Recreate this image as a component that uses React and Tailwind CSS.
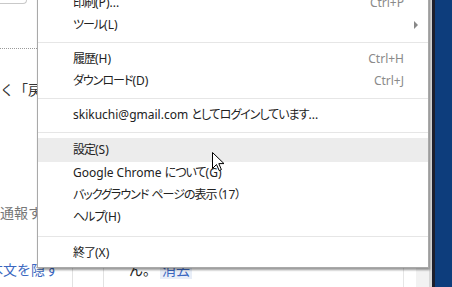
import { Fragment } from "react";

const items = [
  { label: "印刷(P)...", shortcut: "Ctrl+P" },
  { label: "ツール(L)", arrow: true },
  { sep: true },
  { label: "履歴(H)", shortcut: "Ctrl+H" },
  { label: "ダウンロード(D)", shortcut: "Ctrl+J" },
  { sep: true },
  { label: "skikuchi@gmail.com としてログインしています..." },
  { sep: true },
  { label: "設定(S)", active: true },
  { label: "Google Chrome について(G)" },
  { label: "バックグラウンド ページの表示（17）" },
  { label: "ヘルプ(H)" },
  { sep: true, wide: true },
  { label: "終了(X)" },
];

// kana / kanji runs get a little tighter, like Meiryo UI
function Label({ text }) {
  const runs = text.split(/([\u3000-\u30ff\u4e00-\u9fff\uff08\uff09]+)/);
  return (
    <span>
      {runs.map((r, i) =>
        i % 2 === 1 ? (
          <span key={i} className="tracking-[-1px]">{r}</span>
        ) : (
          <Fragment key={i}>{r}</Fragment>
        )
      )}
    </span>
  );
}

function Cursor() {
  return (
    <svg className="absolute left-[212px] top-[152px]" width="13" height="20" viewBox="0 0 13 20">
      <path d="M0.5 0.5 L0.5 16.5 L4.5 12.5 L7.2 18.6 L9.4 17.6 L6.8 11.6 L12 11.6 Z" fill="#fff" stroke="#000" strokeWidth="1" strokeLinejoin="miter" />
    </svg>
  );
}

export default function App() {
  return (
    <div className="relative w-[452px] h-[287px] overflow-hidden bg-white flex font-['Noto_Sans','Noto_Sans_CJK_JP',sans-serif] text-[#222]">
      {/* page behind the menu */}
      <div className="flex-1 flex flex-col">
        <div className="h-[4px] w-[27px] border-b border-r border-[#c9c9c9] rounded-br-[4px]" />
        <div className="mt-[44px] w-[37px] border-t border-dotted border-[#9a9a9a]" />
        <p className="mt-[31px] h-[20px] leading-[20px] text-[14px] whitespace-nowrap text-[#333]">く「戻</p>
        <p className="mt-[103px] h-[20px] leading-[20px] text-[14px] whitespace-nowrap text-[#777]">通報す</p>
        <div className="mt-[37px] flex-1 flex text-[14px]">
          <div className="w-[72px] overflow-hidden">
            <p className="ml-[-11px] leading-[18px] pt-[1px] text-[#3b67c0] whitespace-nowrap">本文を隠す</p>
          </div>
          <div className="w-[31px] border-l border-[#e2e2e2]" />
          <div className="flex-1 border-l border-[#e2e2e2] flex items-start pl-[25px] pt-[1px] gap-[3px]">
            <span className="leading-[18px]">ん。</span>
            <span className="leading-[18px] px-[2px] bg-[#e8eef8] text-[#3b67c0]">消去</span>
          </div>
          <div className="w-[13px] border-l border-[#e6e6e6]" />
          <div className="w-[13px] bg-[#f2f2f2]" />
        </div>
      </div>
      <div className="w-[3px] bg-[#d8d8d8]" />
      <div className="w-[3px] bg-[#1d1f2c]" />
      <div className="w-[17px] bg-[#0d3d7c]" />

      {/* chrome menu */}
      <div className="absolute left-[37px] top-[-9px] w-[392px] bg-white border border-[#a9a9a9] shadow-[1px_2px_2px_rgba(0,0,0,0.4)] pb-[3px] text-[12px] [font-feature-settings:'palt']">
        {items.map((it, i) =>
          it.sep ? (
            <div key={i} className={it.wide ? "pt-[8px] pb-[5px]" : "pt-[6px] pb-[5px]"}>
              <div className="h-px bg-[#e6e6e6]" />
            </div>
          ) : (
            <div
              key={i}
              className={`flex items-center justify-between pl-[35px] pr-[24px] whitespace-nowrap ${
                it.active ? "h-[24px] bg-[#ececec]" : "h-[22px]"
              }`}
            >
              <Label text={it.label} />
              {it.shortcut && <span className="text-[#8a8a8a]">{it.shortcut}</span>}
              {it.arrow && (
                <span className="mr-[-14px] w-0 h-0 border-y-[4px] border-y-transparent border-l-[4px] border-l-[#888]" />
              )}
            </div>
          )
        )}
      </div>

      <Cursor />
    </div>
  );
}
